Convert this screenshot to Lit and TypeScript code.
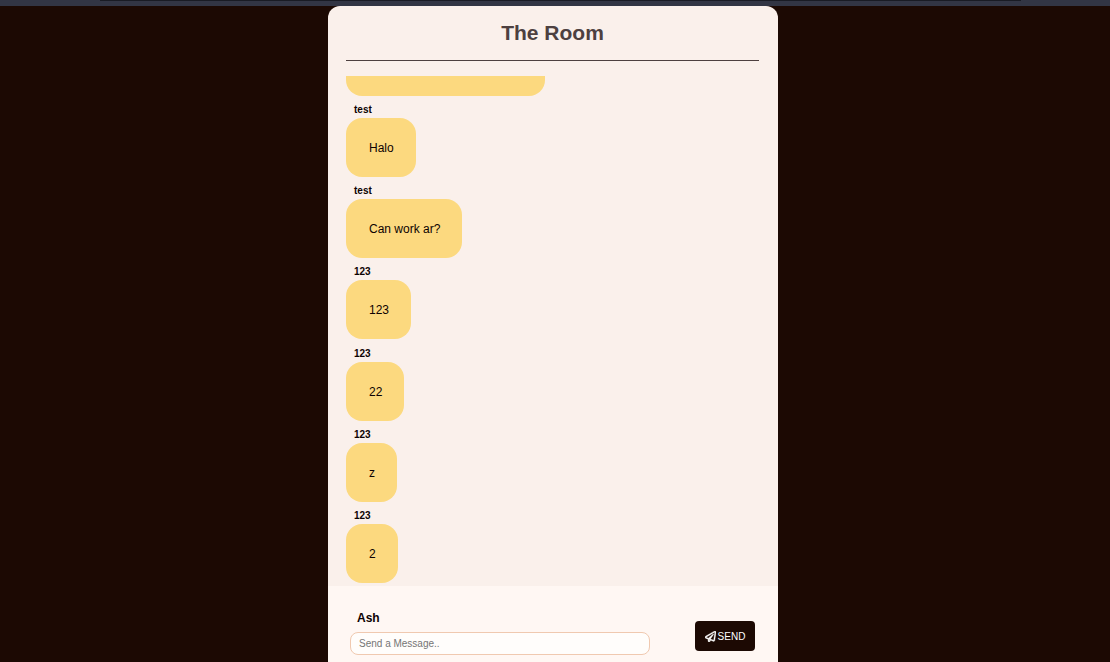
import { LitElement, html, css, svg } from "lit";
import { customElement, property, state } from "lit/decorators.js";

interface Message {
  author: string;
  text: string;
}

const planeIcon = svg`
  <path fill="currentColor" stroke="currentColor" stroke-width="20" d="M440 6.500 24 246.400c-34.400 19.900-31.100 70.800 5.700 85.900L144 379.600V464c0 46.400 59.200 65.500 86.600 28.600l43.800-59.100 111.900 46.200c5.900 2.400 12.100 3.600 18.300 3.600 8.200 0 16.300-2.100 23.600-6.200 12.800-7.200 21.600-20 23.900-34.500l59.400-387.200c6.100-40.100-36.900-68.800-71.500-48.900zM192 464v-64.600l36.600 15.100L192 464zm212.600-28.700-153.800-63.500L391 169.500c10.700-15.500-9.500-33.500-23.700-21.200L155.800 332.600 48 288 464 48l-59.400 387.300z"/>`;

@customElement("chat-message")
export class ChatMessage extends LitElement {
  @property() author = "";
  @property() text = "";

  static styles = css`
    :host {
      display: flex;
      flex-direction: column;
      align-items: flex-start;
      flex: none;
    }
    .author {
      margin: 0;
      padding: 8px 8px 2px;
      font-size: 10px;
      line-height: 12px;
      font-weight: 700;
    }
    .bubble {
      margin: 0;
      padding: 21px 22px 20px 23px;
      border-radius: 16px;
      background: #fcd97f;
      font-size: 12px;
      line-height: 18px;
    }
  `;

  render() {
    return html`
      <p class="author">${this.author}</p>
      <p class="bubble">${this.text}</p>
    `;
  }
}

@customElement("app-root")
export class AppRoot extends LitElement {
  @state() private user = "Ash";
  @state() private messages: Message[] = [
    { author: "test", text: "Halo" },
    { author: "test", text: "Can work ar?" },
    { author: "123", text: "123" },
    { author: "123", text: "22" },
    { author: "123", text: "z" },
    { author: "123", text: "2" },
  ];

  static styles = css`
    :host {
      display: flex;
      flex-direction: column;
      height: 100vh;
      background: #1c0903;
      color: #0d0202;
      font-family: "Liberation Sans", Arial, sans-serif;
    }
    .strip {
      flex: none;
      height: 6px;
      background: #323544;
    }
    .strip-line {
      height: 1px;
      margin: 0 8% 0 9%;
      background: #191b24;
    }
    .stage {
      flex: 1;
      min-height: 0;
      display: flex;
      justify-content: center;
      padding-right: 4px;
    }
    .room {
      box-sizing: border-box;
      width: 100%;
      max-width: 450px;
      display: flex;
      flex-direction: column;
      border-radius: 12px 12px 0 0;
      overflow: hidden;
      background: #faf0eb;
    }
    .head {
      margin: 0 19px 0 18px;
      padding: 14px 0 15px;
      border-bottom: 1px solid #4d4040;
      text-align: center;
    }
    .title {
      margin: 0;
      font-size: 21px;
      line-height: 25px;
      color: #4d4040;
    }
    .log {
      flex: 1;
      min-height: 0;
      margin: 15px 18px 3px;
      overflow: hidden;
      display: flex;
      flex-direction: column;
      justify-content: space-between;
    }
    .earlier {
      flex: none;
      width: 48%;
      height: 20px;
      border-radius: 0 0 16px 16px;
      background: #fcd97f;
    }
    .composer {
      display: flex;
      align-items: flex-end;
      justify-content: space-between;
      padding: 24px 23px 7px 22px;
      background: #fff7f3;
    }
    .field {
      display: flex;
      flex-direction: column;
      gap: 6px;
      width: 300px;
    }
    .user {
      padding-left: 7px;
      font-size: 12px;
      line-height: 16px;
      font-weight: 700;
    }
    .entry {
      box-sizing: border-box;
      width: 100%;
      height: 23px;
      padding: 0 8px;
      border: 1px solid #f0c9b0;
      border-radius: 8px;
      background: #fffdfb;
      font-family: inherit;
      font-size: 10px;
      color: inherit;
      outline: none;
    }
    .entry::placeholder {
      color: #757575;
    }
    .send {
      display: flex;
      align-items: center;
      justify-content: center;
      gap: 2px;
      width: 60px;
      height: 30px;
      margin-bottom: 4px;
      padding: 0;
      border: 0;
      border-radius: 4px;
      background: #1c0903;
      color: #ffffff;
      font-family: inherit;
      font-size: 10px;
      cursor: pointer;
    }
    .icon {
      width: 11px;
      height: 11px;
    }
  `;

  private submit(event: Event) {
    event.preventDefault();
    const entry = this.renderRoot.querySelector<HTMLInputElement>("#entry");
    const text = entry?.value.trim();
    if (!entry || !text) return;
    this.messages = [...this.messages.slice(1), { author: this.user, text }];
    entry.value = "";
  }

  render() {
    return html`
      <div class="strip"><div class="strip-line"></div></div>
      <div class="stage">
        <main class="room">
          <header class="head"><h1 class="title">The Room</h1></header>
          <section class="log">
            <div class="earlier"></div>
            ${this.messages.map(
              (m) => html`<chat-message .author=${m.author} .text=${m.text}></chat-message>`
            )}
          </section>
          <form class="composer" @submit=${this.submit}>
            <div class="field">
              <label class="user" for="entry">${this.user}</label>
              <input class="entry" id="entry" type="text" placeholder="Send a Message.." autocomplete="off" />
            </div>
            <button class="send" type="submit">
              <svg class="icon" viewBox="0 0 512 512" aria-hidden="true">${planeIcon}</svg>
              SEND
            </button>
          </form>
        </main>
      </div>
    `;
  }
}
